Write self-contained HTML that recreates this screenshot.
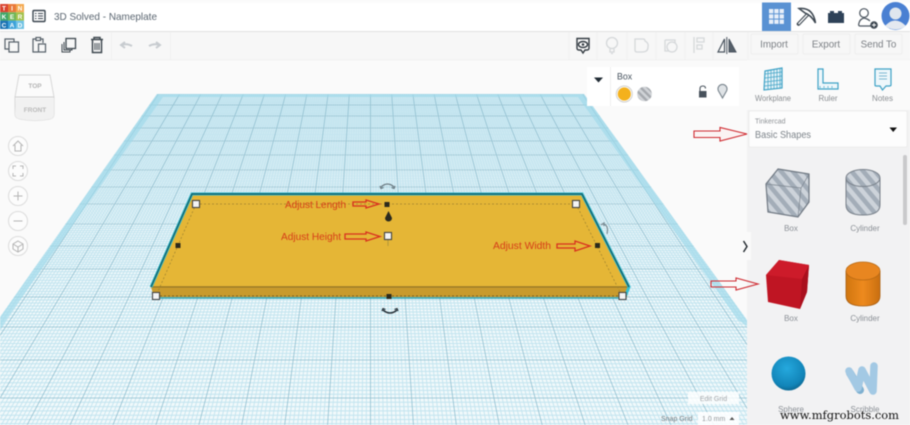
<!DOCTYPE html>
<html><head><meta charset="utf-8"><style>
html,body{margin:0;padding:0;width:910px;height:425px;overflow:hidden;background:#fafafa}
svg{display:block;filter:blur(.45px)}
text{font-family:"Liberation Sans",sans-serif}
</style></head><body>
<svg id="s" xmlns="http://www.w3.org/2000/svg" width="910" height="425" viewBox="0 0 910 425">
<defs>
<clipPath id="pl"><polygon points="157,94 584,94 747,320 747,425 0,425 0,317"/></clipPath>
<pattern id="h" width="9" height="9" patternUnits="userSpaceOnUse" patternTransform="rotate(-40)"><rect width="9" height="9" fill="#cdd3da"/><rect width="4.500" height="9" fill="#a3adb8"/></pattern>
<pattern id="h2" width="5" height="5" patternUnits="userSpaceOnUse" patternTransform="rotate(-45)"><rect width="5" height="5" fill="#d0d3d7"/><rect width="2.400" height="5" fill="#a5a9ae"/></pattern>
<linearGradient id="cy" x1="0" x2="1" y1="0" y2="0"><stop offset="0" stop-color="#d0760f"/><stop offset=".5" stop-color="#ee8a1e"/><stop offset="1" stop-color="#c96f10"/></linearGradient>
<radialGradient id="sp" cx=".45" cy=".35" r=".7"><stop offset="0" stop-color="#25a9de"/><stop offset=".75" stop-color="#1184b8"/><stop offset="1" stop-color="#0b5f86"/></radialGradient>
</defs>
<rect width="910" height="425" fill="#fafafa"/>
<g clip-path="url(#pl)">
<rect width="910" height="425" fill="#f1f9fb"/>
<g id="grid"></g>
<polygon points="157,94 584,94 747,320 747,326 738,320 578,97 163,97 8,317 0,330 0,317" fill="#9ed8ea" opacity=".65"/>
</g>

<!-- object -->
<polygon points="192,194 582,194 629,287 627,297 154,297 151,287" fill="#c89a2d"/>
<polygon points="192,194 582,194 628,286 152,286" fill="#e5b636"/>
<path d="M152,287H628" stroke="#8f7426" stroke-width="1"/>
<path d="M154,298H625" stroke="#2fa5b5" stroke-width="1.400"/>
<path d="M151,287L192,194H582L629,287L625,297" fill="none" stroke="#35c0d2" stroke-width="3"/>
<path d="M151,287L192,194H582L629,287" fill="none" stroke="#17626a" stroke-width="1.400"/>
<path d="M196,204H576L622,296M196,204L156,296" fill="none" stroke="#9a8030" stroke-width=".7" stroke-dasharray="2 2"/>
<path d="M156,296H622" stroke="#5c4d1e" stroke-width=".7" stroke-dasharray="2 2"/>
<g fill="#f4f4f4" stroke="#444" stroke-width="1.100">
<rect x="192.500" y="200.500" width="7" height="7"/><rect x="572.500" y="200.500" width="7" height="7"/><rect x="384.500" y="232.500" width="7" height="7"/><rect x="152.500" y="292.500" width="7" height="7"/><rect x="619" y="292.500" width="7" height="7"/></g>
<g fill="#2c2a1c"><rect x="384.500" y="202" width="5" height="5"/><rect x="175.500" y="243" width="5" height="5"/><rect x="595" y="243" width="5" height="5"/><rect x="386.500" y="294" width="5" height="5"/></g>
<path d="M388.500,211L392,218A3.500,3.500 0 1 1 385,218Z" fill="#2b2a1f"/>
<path d="M388,240V246" stroke="#a08a3a" stroke-width=".7"/>
<g fill="none" stroke-width="1.200">
<path d="M381,187Q387.500,181 394,187" stroke="#6b7a82"/><path d="M380,186l1,2.500 2.500,-1M395,186l-1,2.500 -2.500,-1" stroke="#6b7a82"/>
<path d="M383,310Q390,316 397,310" stroke="#27333b" stroke-width="1.500"/><path d="M382,311l1,-2.500 2.500,1M398,311l-1,-2.500 -2.500,1" stroke="#27333b"/>
<path d="M603,224Q609,225 607,234" stroke="#7a8a92"/><path d="M601,225l3,-2 0,3" stroke="#7a8a92"/></g>

<!-- annotations -->
<g fill="#d63d18" font-size="10">
<text x="285" y="208" textLength="61" lengthAdjust="spacingAndGlyphs">Adjust Length</text>
<text x="281" y="240" textLength="60" lengthAdjust="spacingAndGlyphs">Adjust Height</text>
<text x="493" y="249" textLength="58" lengthAdjust="spacingAndGlyphs">Adjust Width</text>
</g>
<g fill="none" stroke="#d8301f" stroke-width="1.300">
<path d="M353,202H366V200L379,204L366,208V206H353Z"/>
<path d="M345,234H366V232L380,236.500L366,241V239H345Z"/>
<path d="M557,244H575V241L590,246L575,251V248H557Z"/>
</g>

<!-- left view controls -->
<path d="M19,75H50L54,97V114Q54,118 50,119Q35,122 20,119Q15,118 15,114V97Z" fill="#fbfbfb" stroke="#d8d8d8"/>
<path d="M15,97H54" stroke="#cfcfcf"/>
<path d="M16,98H54V114Q54,118 50,119Q35,122 20,119Q15,118 15,114Z" fill="#f1f1f1"/>
<text x="35" y="88" font-size="6.500" font-weight="bold" fill="#b4b4b4" text-anchor="middle">TOP</text>
<text x="35" y="112" font-size="6.500" font-weight="bold" fill="#bababa" text-anchor="middle">FRONT</text>
<g fill="#fcfcfc" stroke="#dcdcdc" stroke-width="1"><circle cx="18" cy="146" r="9.500"/><circle cx="18" cy="171" r="9.500"/><circle cx="18" cy="196" r="9.500"/><circle cx="18" cy="221" r="9.500"/><circle cx="18" cy="246" r="9.500"/></g>
<g fill="none" stroke="#b4b4b4" stroke-width="1">
<path d="M13,146L18,141L23,146M15,145V151H21V145"/>
<path d="M13,169V166H16M20,166H23V169M23,173V176H20M16,176H13V173"/>
<path d="M13.500,196H22.500M18,191.500V200.500"/>
<path d="M13.500,221H22.500"/>
<path d="M18,241L23,244V249L18,252L13,249V244ZM13,244L18,247L23,244M18,247V252"/>
</g>

<!-- top bar -->
<rect x="0" y="0" width="910" height="3" fill="#fbfbfb"/>
<rect x="0" y="3" width="910" height="28" fill="#fff"/>
<rect x="0" y="31" width="910" height="29" fill="#f7f7f7"/>
<path d="M0,31.500H910" stroke="#e2e2e2"/>
<path d="M0,60H910" stroke="#f0f0f0"/>
<g>
<rect x="0" y="4" width="8" height="8.300" fill="#d9432f"/><rect x="8" y="4" width="8" height="8.300" fill="#e9793a"/><rect x="16" y="4" width="8" height="8.300" fill="#f4a84e"/>
<rect x="0" y="12.300" width="8" height="8.300" fill="#3fa668"/><rect x="8" y="12.300" width="8" height="8.300" fill="#6fb657"/><rect x="16" y="12.300" width="8" height="8.300" fill="#a4c24c"/>
<rect x="0" y="20.600" width="8" height="8.400" fill="#1c74b4"/><rect x="8" y="20.600" width="8" height="8.400" fill="#3da2d9"/><rect x="16" y="20.600" width="8" height="8.400" fill="#72c3e4"/>
<g fill="#fff" font-size="6.500" font-weight="bold" text-anchor="middle"><text x="4" y="10.500">T</text><text x="12" y="10.500">I</text><text x="20" y="10.500">N</text><text x="4" y="19">K</text><text x="12" y="19">E</text><text x="20" y="19">R</text><text x="4" y="27.300">C</text><text x="12" y="27.300">A</text><text x="20" y="27.300">D</text></g>
</g>
<rect x="33" y="10.500" width="12" height="11" rx="1" fill="none" stroke="#3b4650" stroke-width="1.400"/>
<path d="M35,13.500H36.500M38,13.500H43M35,16H36.500M38,16H43M35,18.500H36.500M38,18.500H43" stroke="#3b4650" stroke-width="1"/>
<text x="54" y="20" font-size="10.500" fill="#5a6570" textLength="103" lengthAdjust="spacingAndGlyphs">3D Solved - Nameplate</text>

<!-- toolbar icons left -->
<g fill="none" stroke="#555f68" stroke-width="1.200">
<path d="M9,49H5V39H14V42"/><rect x="9" y="42" width="9.500" height="10" fill="#f7f7f7"/>
<path d="M36,39H33V52H38M43,43V39H40"/><rect x="36" y="37.500" width="4.500" height="3"/><rect x="38.500" y="44" width="7" height="8"/>
</g>
<g fill="none" stroke="#3f4950" stroke-width="1.300">
<path d="M62,44V52H70V50M64,42V50H72V48" stroke-width="1"/><rect x="66" y="38.500" width="9.500" height="10" fill="#f7f7f7"/>
<path d="M91,39.500H103M94,39.500V37.500H100V39.500M92.500,40V52.500H101.500V40" stroke-width="1.500"/><path d="M95,43V50M97,43V50M99,43V50" stroke-width="1"/>
</g>
<g fill="none" stroke="#c8ccd0" stroke-width="2"><path d="M132,46Q127,43 122,45M125,42L121,45L125,48"/><path d="M149,46Q154,43 159,45M156,42L160,45L156,48"/></g>
<path d="M111.500,32V60M170.500,32V60M569,32V60M597,32V60M627,32V60M656,32V60M685,32V60M713,32V60M748,32V60" stroke="#f1f1f1"/>
<path d="M577,38.500H589V48Q589,50 587,50H585L583,53L581,50H579Q577,50 577,48Z" fill="#fdfdfd" stroke="#333b42" stroke-width="1.400"/>
<ellipse cx="583" cy="44.500" rx="4.500" ry="3" fill="none" stroke="#333b42" stroke-width="1.400"/><circle cx="583" cy="44.500" r="1.300" fill="#333b42"/>
<g fill="none" stroke="#d5d8da" stroke-width="1.300">
<circle cx="612" cy="43" r="5.500"/><path d="M610,49V52H614V49M611,53.500H613"/>
<path d="M635,39H643Q645,39 645,41Q649,43 648,47Q648,52 642,52H637Q635,52 635,50Z"/>
<path d="M665,40H675V43M665,40V51H669"/><circle cx="672" cy="47" r="5"/>
<path d="M694,37V53M697,38H704V42H697ZM697,45H702V49H697Z"/>
</g>
<path d="M724.500,39V52H718Z" fill="none" stroke="#4b5560" stroke-width="1.200"/><path d="M729,39V52H736Z" fill="#56606a" stroke="#4b5560"/><path d="M726.800,37V54" stroke="#4b5560"/>
<g fill="none" stroke="#eeeeee"><rect x="751" y="34" width="47" height="20" rx="1"/><rect x="803" y="34" width="47" height="20" rx="1"/><rect x="855" y="34" width="47" height="20" rx="1"/></g>
<g font-size="9.800" fill="#7b7f84" text-anchor="middle"><text x="774" y="47.500">Import</text><text x="826" y="47.500">Export</text><text x="878.500" y="47.500">Send To</text></g>

<!-- top right -->
<rect x="762" y="2.500" width="29" height="28.500" fill="#5a92d3"/>
<g fill="#e8eff9"><rect x="769" y="9" width="4.300" height="4.300"/><rect x="774.300" y="9" width="4.300" height="4.300"/><rect x="779.600" y="9" width="4.300" height="4.300"/><rect x="769" y="14.300" width="4.300" height="4.300"/><rect x="774.300" y="14.300" width="4.300" height="4.300"/><rect x="779.600" y="14.300" width="4.300" height="4.300"/><rect x="769" y="19.600" width="4.300" height="4.300"/><rect x="774.300" y="19.600" width="4.300" height="4.300"/><rect x="779.600" y="19.600" width="4.300" height="4.300"/></g>
<path d="M798.500,24L809,13" stroke="#3c4650" stroke-width="3.600" stroke-linecap="round"/>
<path d="M798.500,24L809,13" stroke="#fff" stroke-width="1.400"/>
<path d="M799,8.500Q813,7 815.500,23Q811,15 805,13Z" fill="#fff" stroke="#3c4650" stroke-width="1.500"/>
<path d="M828,13H830V11H834V13H838V11H842V13H844V23H828Z" fill="#2e4258"/>
<circle cx="864" cy="13" r="4.300" fill="#fff" stroke="#4c5660" stroke-width="1.200"/>
<path d="M860,26H873M860,26Q858,26 859,23Q860,19 864,18Q868,19 870,21" fill="none" stroke="#4c5660" stroke-width="1.200"/>
<circle cx="874" cy="25" r="3.800" fill="#3f4852"/><path d="M872,25H876M874,23V27" stroke="#fff" stroke-width=".9"/>
<circle cx="895.500" cy="16" r="14" fill="#4a80d2"/>
<circle cx="895.500" cy="13.500" r="6" fill="#dfe6ee"/>
<path d="M885,26Q895,15 906,26Q896,33 885,26Z" fill="#e4e9f0"/>

<!-- right panel -->
<rect x="747" y="60" width="163" height="365" fill="#f2f2f3"/>
<rect x="747" y="60" width="163" height="50" fill="#fafafa"/>
<g fill="none" stroke="#3fa2c6" stroke-width="1.200">
<path d="M765,71L782,68V88L764,90Z" fill="#e4f2f7"/>
<path d="M768,70.500V89.500M771,70V89M774,69.500V89M777,69V88.500M780,68.500V88.500M765,74L782,72M765,78L782,76M765,82L782,80M764.500,86L782,84" stroke-width=".7"/>
<path d="M818,69H823V83H838V89H818Z" fill="#eef7fb"/>
<path d="M820,86V88M824,86V88M828,86V88M832,86V88" stroke-width=".7"/>
<path d="M875,69H891V85Q891,86 889,86H886L882.500,90L880,86H876Q875,86 875,85Z" fill="#eef7fb"/>
<path d="M879,73H887M879,76H887M879,79H887" stroke-width=".9" stroke="#7db8d0"/>
</g>
<g font-size="8" fill="#8a8e92" text-anchor="middle"><text x="773" y="101" textLength="36" lengthAdjust="spacingAndGlyphs">Workplane</text><text x="828" y="101">Ruler</text><text x="882.500" y="101">Notes</text></g>
<rect x="749" y="111" width="158" height="36" fill="#fdfdfd" stroke="#ededed"/>
<text x="755" y="123.500" font-size="7" fill="#8e9296">Tinkercad</text>
<text x="755" y="138" font-size="9.800" fill="#7d848a" textLength="56" lengthAdjust="spacingAndGlyphs">Basic Shapes</text>
<path d="M889.500,127.500H897L893.200,132Z" fill="#111"/>
<path d="M694,131H720V127.500L747,134L720,141V137.500H694Z" fill="#fbf3f3" stroke="#cf2a30" stroke-width="1.100"/>
<rect x="903" y="155" width="4" height="70" rx="2" fill="#c9c9cb"/>

<!-- box panel -->
<rect x="587" y="67" width="152" height="39" fill="#fff"/>
<path d="M610.500,67V106" stroke="#f0f0f0"/>
<path d="M594,77.500H603L598.500,82.500Z" fill="#222c35"/>
<text x="617" y="79.500" font-size="8.800" fill="#46525e">Box</text>
<circle cx="624.300" cy="94" r="8" fill="#fff" stroke="#cfcfcf"/><circle cx="624.300" cy="94" r="6.600" fill="#f4b11d"/>
<circle cx="644.500" cy="94" r="7.300" fill="url(#h2)"/>
<path d="M700,92V88.500Q700,86 703,86Q705.500,86 705.500,88.500" fill="none" stroke="#48525c" stroke-width="1.100"/><rect x="699" y="91" width="7.500" height="6.500" fill="#48525c"/>
<path d="M722.500,98L718.500,91A4.500,4.500 0 1 1 726.500,91Z" fill="#dfe3e6" stroke="#78838c" stroke-width="1.100"/>

<!-- shapes -->
<polygon points="778,169 809,174 809,202 798,217 768,212 766,184" fill="url(#h)" stroke="#6f7882" stroke-width="1.200"/>
<path d="M766,184L801,188L809,174M801,188L798,217" stroke="#7a838d" fill="none" stroke-width=".7"/>
<path d="M846,178V205Q846,215 863,215Q880,215 880,205V178" fill="url(#h)" stroke="#79818a"/>
<ellipse cx="863" cy="178" rx="17" ry="8.500" fill="url(#h)" stroke="#79818a"/>
<polygon points="779,260 809,265 807,292 800,309 768,302 766,275" fill="#bf1523"/>
<polygon points="779,260 809,265 802,279 766,275" fill="#cd1b2a"/>
<polygon points="802,279 809,265 807,292 800,309" fill="#aa101d"/>
<path d="M846,271V296Q846,306 863,306Q880,306 880,296V271" fill="url(#cy)" stroke="#a85c10" stroke-width=".8"/>
<ellipse cx="863" cy="271" rx="17" ry="9" fill="#e88620" stroke="#b96a14" stroke-width=".8"/>
<circle cx="788.500" cy="373.500" r="17" fill="url(#sp)"/>
<path d="M850,373L860,390" stroke="#7fb0d0" stroke-width="8" stroke-linecap="round" fill="none"/>
<path d="M849,371L858,388L862,370L873,391M873,391L874,366" stroke="#a3c9e4" stroke-width="7.500" stroke-linecap="round" stroke-linejoin="round" fill="none"/>
<g font-size="8" fill="#8b9096" text-anchor="middle"><text x="791" y="231">Box</text><text x="865" y="231">Cylinder</text><text x="791" y="321">Box</text><text x="865" y="321">Cylinder</text><text x="791" y="412">Sphere</text><text x="865" y="412">Scribble</text></g>
<path d="M711,281H736V278L758,284L736,290V287H711Z" fill="none" stroke="#cf2a30" stroke-width="1.100"/>
<path d="M747,232H741Q740,232 740,233V259Q740,260 741,260H751V232Z" fill="#fafafa"/>
<path d="M743.500,241L747,246.500L743.500,252" fill="none" stroke="#1f262c" stroke-width="1.400"/>

<!-- grid controls -->
<rect x="688" y="392" width="51" height="12" fill="#fff" opacity=".8"/>
<text x="713.500" y="401" font-size="7" fill="#a4a8ac" text-anchor="middle">Edit Grid</text>
<rect x="698" y="412" width="41" height="13" fill="#fff" opacity=".85"/>
<text x="661" y="421" font-size="7" fill="#7c8084">Snap Grid</text>
<text x="702" y="421" font-size="7" fill="#94989c">1.0 mm</text>
<path d="M729.500,420L732,417L734.500,420Z" fill="#555"/>

<text x="780" y="419" font-size="11.500" fill="#111" style="font-family:'DejaVu Serif','Liberation Serif',serif" textLength="119" lengthAdjust="spacingAndGlyphs">www.mfgrobots.com</text>
</svg>
<script>
(function(){
var N='http://www.w3.org/2000/svg',g=document.getElementById('grid');
var vx=370.5,vy=-229,d='',D='',dv='',i,j;
function xb(x){var k=(425-vy)/(94-vy);return vx+(x-vx)*k;}
for(i=-300;i<=300;i++){var x=vx+2.12*i,s='M'+x.toFixed(2)+',94L'+xb(x).toFixed(2)+',425';
 if(i%10==0)D+=s;else dv+=s;}
var ys=[94,105,116,128,141,155,170,187,204,224,246,269,297,327,360,398,441];
for(i=0;i<ys.length-1;i++){for(j=0;j<10;j++){var y=ys[i]+(ys[i+1]-ys[i])*j/10,s2='M0,'+y.toFixed(2)+'H760';
 if(j==0)D+=s2;else d+=s2;}}
function add(p,c,w){var e=document.createElementNS(N,'path');e.setAttribute('d',p);e.setAttribute('stroke',c);e.setAttribute('stroke-width',w);e.setAttribute('fill','none');g.appendChild(e);}
add(d,'#c2e4ef','1');add(dv,'#c2e4ef','.9');add(D,'#8fbfd0','.8');
})();
</script>
</body></html>
